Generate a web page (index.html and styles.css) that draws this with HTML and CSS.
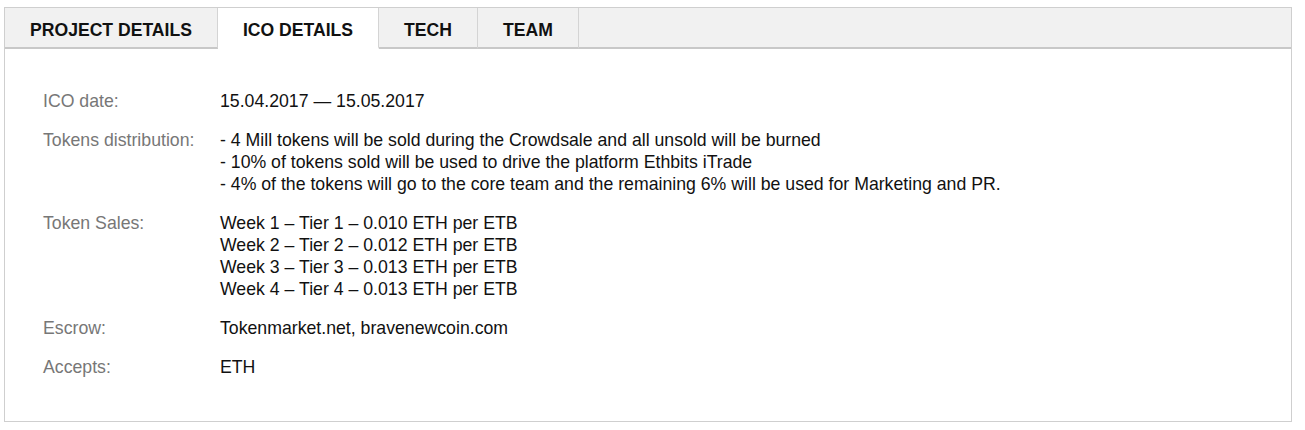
FILE: index.html
```html
<!DOCTYPE html>
<html>
<head>
<meta charset="utf-8">
<link rel="stylesheet" href="styles.css">
</head>
<body>
<div class="panel">
  <div class="tabs">
    <div class="tab">PROJECT DETAILS</div>
    <div class="tab active">ICO DETAILS</div>
    <div class="tab">TECH</div>
    <div class="tab">TEAM</div>
    <div class="tab-fill"></div>
  </div>
  <div class="content">
    <div class="row">
      <div class="label">ICO date:</div>
      <div class="value">15.04.2017 — 15.05.2017</div>
    </div>
    <div class="row">
      <div class="label">Tokens distribution:</div>
      <div class="value">- 4 Mill tokens will be sold during the Crowdsale and all unsold will be burned<br>- 10% of tokens sold will be used to drive the platform Ethbits iTrade<br>- 4% of the tokens will go to the core team and the remaining 6% will be used for Marketing and PR.</div>
    </div>
    <div class="row">
      <div class="label">Token Sales:</div>
      <div class="value">Week 1 – Tier 1 – 0.010 ETH per ETB<br>Week 2 – Tier 2 – 0.012 ETH per ETB<br>Week 3 – Tier 3 – 0.013 ETH per ETB<br>Week 4 – Tier 4 – 0.013 ETH per ETB</div>
    </div>
    <div class="row">
      <div class="label">Escrow:</div>
      <div class="value">Tokenmarket.net, bravenewcoin.com</div>
    </div>
    <div class="row">
      <div class="label">Accepts:</div>
      <div class="value">ETH</div>
    </div>
  </div>
</div>
</body>
</html>
```

FILE: styles.css
```css
html, body {
  margin: 0;
  padding: 0;
  background: #fff;
}
body {
  font-family: "Liberation Sans", Arial, sans-serif;
  color: #111;
}
.panel {
  margin: 7px 0 0 4px;
  width: 1288px;
  box-sizing: border-box;
  border: 1px solid #cfcfcf;
}
.tabs {
  display: flex;
  height: 41px;
  background: #f1f1f1;
}
.tab {
  display: flex;
  align-items: center;
  padding: 6px 25px 0 25px;
  font-weight: bold;
  font-size: 17.6px;
  color: #111;
  border-right: 1px solid #d4d4d4;
  border-bottom: 2px solid #c8c8c8;
}
.tab.active {
  background: #fff;
  border-bottom-color: #fff;
}
.tab-fill {
  flex: 1;
  border-bottom: 2px solid #c8c8c8;
}
.content {
  padding: 41px 0 43px 38px;
  display: flex;
  flex-direction: column;
  gap: 17px;
}
.row {
  display: flex;
  font-size: 17.7px;
  line-height: 22px;
}
.row.tight {
  line-height: 21px;
}
.label {
  width: 177px;
  flex: none;
  color: #777;
}
.value {
  color: #111;
}
```
